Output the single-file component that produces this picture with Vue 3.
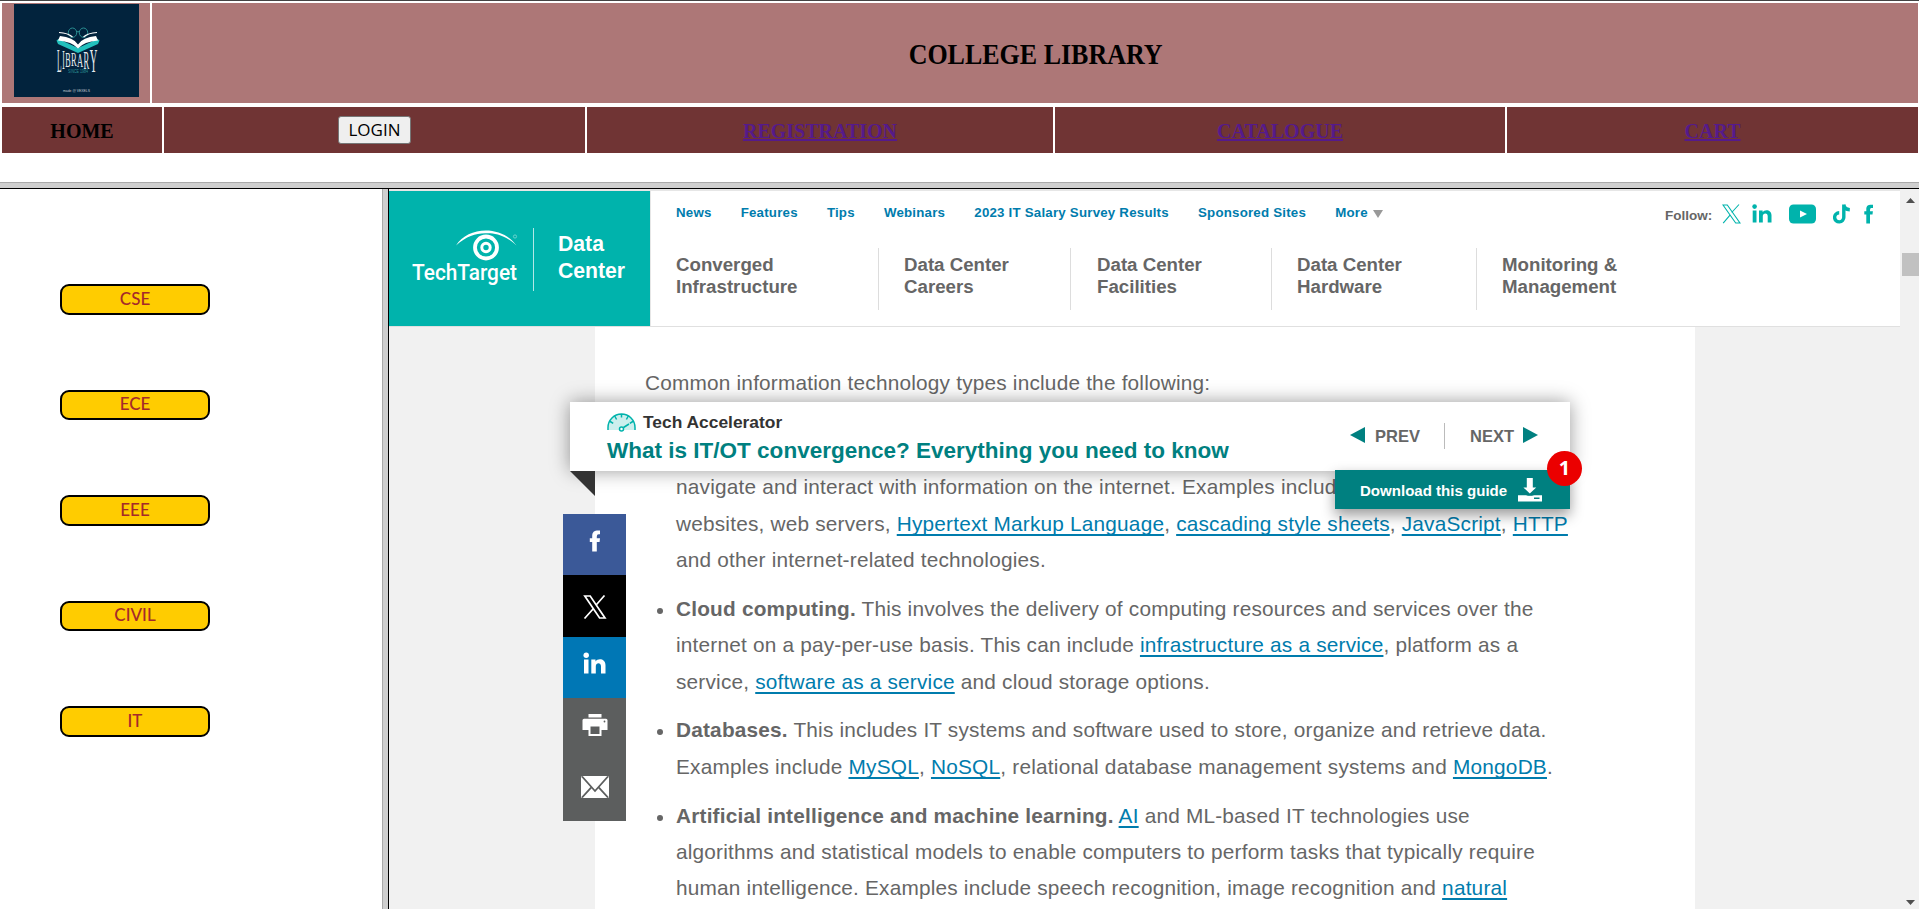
<script setup>
const departments = ['CSE', 'ECE', 'EEE', 'CIVIL', 'IT']
const topLinks = ['News', 'Features', 'Tips', 'Webinars', '2023 IT Salary Survey Results', 'Sponsored Sites', 'More']
const sections = [
  ['Converged', 'Infrastructure'],
  ['Data Center', 'Careers'],
  ['Data Center', 'Facilities'],
  ['Data Center', 'Hardware'],
  ['Monitoring &', 'Management'],
]
</script>

<template>
  <div class="page">
    <header class="banner">
      <div class="banner-logo">
        <svg width="125" height="93" viewBox="0 0 125 93">
          <rect width="125" height="93" fill="#02233d" />
          <g fill="none" stroke="#2a8f93" stroke-width="1">
            <ellipse cx="58.500" cy="28.700" rx="4.200" ry="4.700" />
            <ellipse cx="69.500" cy="28.700" rx="4.200" ry="4.700" />
            <path d="M62.700 28.200q1.300-1.500 2.600 0" />
          </g>
          <path d="M42.500 36.500l2-1.500 19.500 9 19.500-9 2 1.500-1.500 3.500-20 9-20-9z" fill="#23c0bd" />
          <path d="M46 32q13 1 18 8.500 5-7.500 18-8.500l2 4.500q-14 1-20 8-6-7-20-8z" fill="#fff" />
          <path d="M45 28.500q9 .5 13.500 4.500M83 28.500q-9 .5-13.500 4.500" fill="none" stroke="#fff" stroke-width="1.200" />
          <g fill="#e6ebee" class="logo-word" font-size="15">
            <text transform="translate(43 68) scale(.5 2.300)">L</text>
            <text transform="translate(48.200 65) scale(.5 1.800)">I</text>
            <text transform="translate(51.200 63) scale(.54 1.350)">B</text>
            <text transform="translate(57 62) scale(.57 1.200)">R</text>
            <text transform="translate(63 62.500) scale(.56 1.300)">A</text>
            <text transform="translate(69.400 64.700) scale(.57 1.700)">R</text>
            <text transform="translate(75.800 68) scale(.7 2.300)">Y</text>
          </g>
          <text x="54" y="69" font-size="5.500" textLength="20" lengthAdjust="spacingAndGlyphs" fill="#2a8f93" class="logo-small">SINCE 1984</text>
          <text x="49" y="88" font-size="4" textLength="27" lengthAdjust="spacingAndGlyphs" fill="#c3ccd2" class="logo-small">made @ VEXELS</text>
        </svg>
      </div>
      <div class="banner-title"><h1>COLLEGE LIBRARY</h1></div>
    </header>

    <nav class="menu">
      <div>HOME</div>
      <div><button class="login">LOGIN</button></div>
      <div><a>REGISTRATION</a></div>
      <div><a>CATALOGUE</a></div>
      <div><a>CART</a></div>
    </nav>

    <main class="frames">
      <aside class="side">
        <button v-for="d in departments" :key="d" class="dept">{{ d }}</button>
      </aside>

      <section class="site">
        <div class="site-main">
          <div class="site-head">
            <div class="brand">
              <svg width="110" height="60" viewBox="0 0 110 60">
                <path d="M46 17.500C58-2 92-3 106.500 17.500 94 6 83 5 76.500 5.300 66 5 57 8 46 17.500z" fill="#fff" />
                <circle cx="76" cy="19.500" r="11" fill="#00b3ac" stroke="#fff" stroke-width="3.800" />
                <circle cx="76" cy="19.500" r="4.200" fill="none" stroke="#fff" stroke-width="3" />
                <circle cx="105" cy="8.500" r="1.600" fill="none" stroke="#8fdcd8" stroke-width=".7" />
                <text x="2" y="52" font-size="22.500" textLength="105" lengthAdjust="spacingAndGlyphs" fill="#fff" class="brand-word">TechTarget</text>
              </svg>
              <i class="brand-rule"></i>
              <div class="brand-name">Data<br>Center</div>
            </div>
            <div class="head-right">
              <div class="top-row">
                <div class="top-links">
                  <a v-for="t in topLinks" :key="t">{{ t }}</a>
                  <svg width="10" height="8" viewBox="0 0 10 8"><path d="M0 0h10L5 8z" fill="#999" /></svg>
                </div>
                <div class="follow">
                  <span>Follow:</span>
                  <svg class="s-x" width="19" height="20" viewBox="0 0 19 20" fill="none" stroke="#00b3ac" stroke-width="1.100"><path d="M1 1h4.300L18 19h-4.300zM17 .5l-7.300 8M8 11.200L1.200 19.200" /></svg>
                  <svg class="s-in" width="20" height="20" viewBox="0 0 20 20" fill="#00b3ac"><circle cx="2.600" cy="2.600" r="2.300" /><path d="M.7 6.400h3.800V18.500H.7zM7 6.400h3.600v1.700c1.800-3 8.900-3 8.900 3.200v7.200h-3.800v-6.400c0-3.400-4.900-3.200-4.900 0v6.400H7z" /></svg>
                  <svg class="s-yt" width="27" height="20" viewBox="0 0 27 20"><rect y=".5" width="27" height="19" rx="4.500" fill="#00b3ac" /><path d="M11 6.500v7l7-3.500z" fill="#fff" /></svg>
                  <svg class="s-tt" width="18" height="20" viewBox="0 0 18 20" fill="none" stroke="#00b3ac" stroke-width="3.400"><path d="M10.800 .5v12.500a4.600 4.600 0 1 1-4.600-4.300M10.800 .5c.3 3 2.500 5 6 5.200" /></svg>
                  <svg class="s-f" width="10" height="20" viewBox="0 0 10 20" fill="#00b3ac"><path d="M2.300 19.500V10.500H.3V7.200h2V5.200C2.300 1.800 4 .4 9 .8V4C6.500 3.900 6 4 6 7.200h2.900l-.4 3.300H6v9z" /></svg>
                </div>
              </div>
              <div class="sections">
                <div v-for="(s, i) in sections" :key="i" :class="'sec sec' + i">{{ s[0] }}<br>{{ s[1] }}</div>
              </div>
            </div>
          </div>

          <div class="article">
            <p class="intro"><span>Common information technology types include the following:</span></p>
            <ul>
              <li class="cont">
                <span>navigate and interact with information on the internet. Examples include</span>
                <span>websites, web servers, <a>Hypertext Markup Language</a>, <a>cascading style sheets</a>, <a>JavaScript</a>, <a>HTTP</a></span>
                <span>and other internet-related technologies.</span>
              </li>
              <li>
                <span><b>Cloud computing.</b> This involves the delivery of computing resources and services over the</span>
                <span>internet on a pay-per-use basis. This can include <a>infrastructure as a service</a>, platform as a</span>
                <span>service, <a>software as a service</a> and cloud storage options.</span>
              </li>
              <li>
                <span><b>Databases.</b> This includes IT systems and software used to store, organize and retrieve data.</span>
                <span class="wide">Examples include <a>MySQL</a>, <a>NoSQL</a>, relational database management systems and <a>MongoDB</a>.</span>
              </li>
              <li>
                <span><b>Artificial intelligence and machine learning.</b> <a>AI</a> and ML-based IT technologies use</span>
                <span>algorithms and statistical models to enable computers to perform tasks that typically require</span>
                <span>human intelligence. Examples include speech recognition, image recognition and <a>natural</a></span>
              </li>
            </ul>
          </div>
        </div>

        <div class="scroll">
          <svg width="9" height="5" viewBox="0 0 9 5"><path d="M0 5L4.500 0 9 5z" fill="#505050" /></svg>
          <i class="thumb"></i>
          <svg class="down" width="9" height="5" viewBox="0 0 9 5"><path d="M0 0h9L4.500 5z" fill="#505050" /></svg>
        </div>

        <div class="accel">
          <div class="accel-text">
            <div class="accel-kicker">
              <svg width="29" height="19" viewBox="0 0 29 19">
                <path d="M1 17V14.500a13.500 13.500 0 0 1 27 0V17z" fill="#ccefed" />
                <path d="M1 17V14.500a13.500 13.500 0 0 1 27 0V17M14.500 1v3.500M8 3.500l1.600 3M21 3.500l-1.600 3M3.200 8.500l3 1.900M25.800 8.500l-3 1.900M16.500 14.500l5.500-3.500" fill="none" stroke="#00b3ac" stroke-width="1.500" />
                <circle cx="14.500" cy="16" r="2" fill="#fff" stroke="#00b3ac" stroke-width="1.500" />
              </svg>
              <span>Tech Accelerator</span>
            </div>
            <div class="accel-title"><span>What is IT/OT convergence? Everything you need to know</span></div>
          </div>
          <div class="pager">
            <svg width="15" height="16" viewBox="0 0 15 16"><path d="M15 0v16L0 8z" fill="#008080" /></svg>
            <span class="prev">PREV</span>
            <i></i>
            <span class="next">NEXT</span>
            <svg width="15" height="16" viewBox="0 0 15 16"><path d="M0 0v16l15-8z" fill="#008080" /></svg>
          </div>
          <svg class="fold" width="25" height="25" viewBox="0 0 25 25"><path d="M0 0h25v25z" fill="#333" /></svg>
          <div class="download">
            <span>Download this guide</span>
            <svg width="24" height="24" viewBox="0 0 24 24" fill="#fff"><path d="M8.800 0h6v9.500h3.400L11.800 15.500 5.400 9.500h3.400zM0 17.200h24v6.300H0z" /><path d="M5 16h14l-5 1.800H10zM16 19.500h5.500V21H16z" fill="#008080" /></svg>
            <b class="badge">1</b>
          </div>
        </div>

        <div class="share">
          <div class="fb"><svg width="12" height="22" viewBox="0 0 12 22" fill="#fff"><path d="M3.200 21.500V12H.8V8.200h2.400V6C3.200 2 5.200.2 11 .6v3.700C8.300 4.200 7.800 4.500 7.800 8.200H11l-.4 3.800H7.800v9.500z" /></svg></div>
          <div class="tw"><svg width="24" height="24" viewBox="0 0 24 24" fill="none" stroke="#fff" stroke-width="1.700"><path d="M1.800 1h5.400L22 23h-5.400zM21.500.5l-8.800 10M10.500 13.500L1.500 23.500" /></svg></div>
          <div class="li"><svg width="23" height="22" viewBox="0 0 23 22" fill="#fff"><circle cx="3.200" cy="3.200" r="2.700" /><path d="M1 7.500h4.500V21.500H1zM8.300 7.500h4.200v2c2-3.500 10-3.400 10 3.700v8.300H18v-7.300c0-4-5.200-3.800-5.200 0v7.300H8.300z" /></svg></div>
          <div class="pr"><svg width="26" height="22" viewBox="0 0 26 22"><path d="M6.500 0h13v3.500h-13zM2 4.800h22q1.500 0 1.500 1.500V16H19.500v6h-13v-6H.5V6.300Q.5 4.800 2 4.800z" fill="#fff" /><path d="M8.500 12.500h9V20h-9z" fill="#5c5e5e" /><circle cx="22.500" cy="7.500" r=".9" fill="#5c5e5e" /></svg></div>
          <div class="ml"><svg width="28" height="22" viewBox="0 0 28 22"><rect width="28" height="22" rx="1.500" fill="#fff" /><path d="M1 .5L14 15 27 .5M1 21.500L10.300 11.300M27 21.500L17.700 11.300" fill="none" stroke="#5c5e5e" stroke-width="1.800" /></svg></div>
        </div>
      </section>
    </main>
  </div>
</template>

<style>
body { overflow: hidden; background: #fff; }
</style>

<style scoped>
* { box-sizing: border-box; }
.page { width: 1919px; height: 909px; overflow: hidden; border-top: 1px solid #444; padding-top: 2px; display: flex; flex-direction: column; font-family: "Liberation Sans", Arial, sans-serif; }
svg { display: block; flex: none; }
.banner { display: grid; grid-template-columns: 148px 1766px; gap: 2px; padding-left: 2px; height: 100px; flex: none; }
.banner > div { background: #ad7777; }
.banner-logo { padding: 1px 0 0 12px; }
.logo-word { font-family: "Liberation Serif", serif; }
.logo-small { font-family: "Liberation Sans", sans-serif; }
.banner-title { display: flex; justify-content: center; align-items: center; }
h1 { margin: 1px 0 0 2px; font: bold 30px/36px "Liberation Serif", serif; white-space: nowrap; transform: scaleX(.866); }
.menu { display: grid; grid-template-columns: 160px 421px 466px 450px 411px; gap: 2px; padding-left: 2px; margin-top: 4px; height: 46px; flex: none; font: bold 20px/24px "Liberation Serif", serif; }
.menu > div { background: #703434; display: flex; align-items: center; justify-content: center; padding-top: 1px; }
.menu a { color: #551a8b; text-decoration: underline; text-decoration-thickness: 2px; }
.login { width: 73px; height: 28px; margin-top: -2px; padding: 0; border: 1px solid #767676; border-radius: 3px; background: #efefef; color: #000; font: 500 17px/24px "Open Sans", sans-serif; }
.frames { margin-top: 29px; border-top: 1px solid #a9a9a9; display: grid; grid-template-columns: 382px 1fr; height: 727px; box-shadow: inset 0 5px #cfcfcf, inset 0 6px #000; padding-top: 6px; flex: none; }
.side { padding: 95px 0 0 60px; display: flex; flex-direction: column; gap: 75px; }
.dept { width: 150px; height: 30.500px; flex: none; padding: 0 0 1px; border: 2px solid #000; border-radius: 9px; background: #fc0; color: #a52a2a; font: 500 17px/24px Lato, sans-serif; }
.site { border-left: 1px solid #a9a9a9; box-shadow: inset 5px 0 #cfcfcf, inset 6px 0 #000; padding-left: 6px; display: flex; position: relative; height: 720px; background: #f1f1f1; overflow: hidden; }
.site-main { width: 1513px; display: flex; flex-direction: column; }
.site-head { display: flex; width: 1511px; height: 138px; flex: none; background: #fff; border-top: 2px solid #e6e6e6; border-bottom: 1px solid #e0e0e0; }
.brand { width: 261px; background: #00b3ac; padding: 37px 0 0 21px; display: flex; }
.brand-word { font-family: Roboto, sans-serif; font-weight: 500; }
.brand-rule { width: 1px; height: 63px; background: #b3e8e6; margin-left: 13px; }
.brand-name { margin: 2px 0 0 24px; font: bold 21.200px/27px "Liberation Sans", sans-serif; color: #fff; }
.head-right { flex: 1; border-left: 1px solid #e6e6e6; }
.top-row { display: flex; height: 57px; }
.top-links { display: flex; gap: 29.100px; padding: 14px 0 0 25px; width: 1014px; font: bold 13.300px/16px "Liberation Sans", sans-serif; color: #007cad; white-space: nowrap; letter-spacing: .21px; }
.top-links svg { margin: 5px 0 0 -24px; }
.follow { display: flex; padding-top: 13px; font: bold 13.500px/23px "Liberation Sans", sans-serif; color: #666; }
.s-x { margin-left: 10px; }
.s-in { margin-left: 11px; }
.s-yt { margin-left: 17px; }
.s-tt { margin-left: 17px; }
.s-f { margin-left: 13px; }
.sections { display: flex; font: bold 18.700px/22px "Liberation Sans", sans-serif; color: #666; white-space: nowrap; }
.sec { height: 62px; padding: 6px 0 0 26px; border-left: 1px solid #ddd; }
.sec0 { width: 227px; padding-left: 25px; border: 0; }
.sec1 { width: 192px; padding-left: 25px; }
.sec2 { width: 201px; }
.sec3 { width: 205px; padding-left: 25px; }
.sec4 { padding-left: 25px; }
.article { width: 1100px; margin-left: 206px; background: #fff; flex: 1; font-size: 20.800px; line-height: 36.400px; color: #666; padding: 38px 0 0 50px; }
.article p { margin: 0; }
.article span { display: block; white-space: nowrap; letter-spacing: .2px; }
.article .wide { letter-spacing: .22px; }
.article a { color: #007cad; text-decoration: underline; text-decoration-thickness: 2px; text-underline-offset: 3px; text-decoration-skip-ink: none; }
ul { margin: 68px 0 0; padding: 0 0 0 31px; list-style: none; }
li { margin-bottom: 12.300px; position: relative; }
li::before { content: ""; position: absolute; left: -19px; top: 17px; width: 6px; height: 6px; border-radius: 50%; background: #666; }
.cont::before { display: none; }
.scroll { width: 17px; display: flex; flex-direction: column; align-items: center; padding-top: 9px; }
.thumb { width: 17px; height: 23px; background: #c1c1c1; margin-top: 50px; }
.down { margin-top: auto; margin-bottom: 4px; }
.accel { position: absolute; left: 187px; top: 213px; width: 1000px; height: 69px; background: #fff; box-shadow: 0 0 18px rgba(0, 0, 0, .4); display: flex; justify-content: space-between; padding: 10px 32px 0 37px; white-space: nowrap; }
.accel-kicker { display: flex; gap: 7px; font: bold 17.400px/20px "Liberation Sans", sans-serif; color: #333; }
.accel-kicker svg { margin-top: 1px; }
.accel-title { font: bold 22.530px/28px "Liberation Sans", sans-serif; color: #008080; margin-top: 5px; }
.pager { display: flex; color: #666; font: bold 16.500px/18px "Liberation Sans", sans-serif; padding-top: 15px; }
.pager i { width: 1px; height: 26px; background: #bbb; margin: -4px 25px 0 24px; }
.pager .prev { margin-left: 10px; }
.next { margin-right: 9px; }
.fold { position: absolute; left: 0; top: 69px; }
.download { position: absolute; right: 0; top: 68px; width: 235px; height: 39px; background: #008080; box-shadow: 0 6px 14px rgba(0, 0, 0, .4); color: #fff; display: flex; padding: 8px 0 0 25px; font: bold 15.050px/25px "Liberation Sans", sans-serif; }
.download svg { margin-left: 11px; }
.badge { position: absolute; right: -12px; top: -19px; width: 35px; height: 35px; border-radius: 50%; background: #eb0000; font: bold 20px/33px "Open Sans", sans-serif; text-align: center; }
.share { position: absolute; left: 180px; top: 325px; width: 63px; }
.share div { height: 61.400px; display: flex; justify-content: center; padding-top: 16px; }
.fb { background: #3b5998; }
.tw { background: #000; }
.share .tw { padding-top: 20px; }
.li { background: #0077b5; }
.share .li { padding-top: 15px; }
.pr, .ml { background: #5c5e5e; }
</style>
